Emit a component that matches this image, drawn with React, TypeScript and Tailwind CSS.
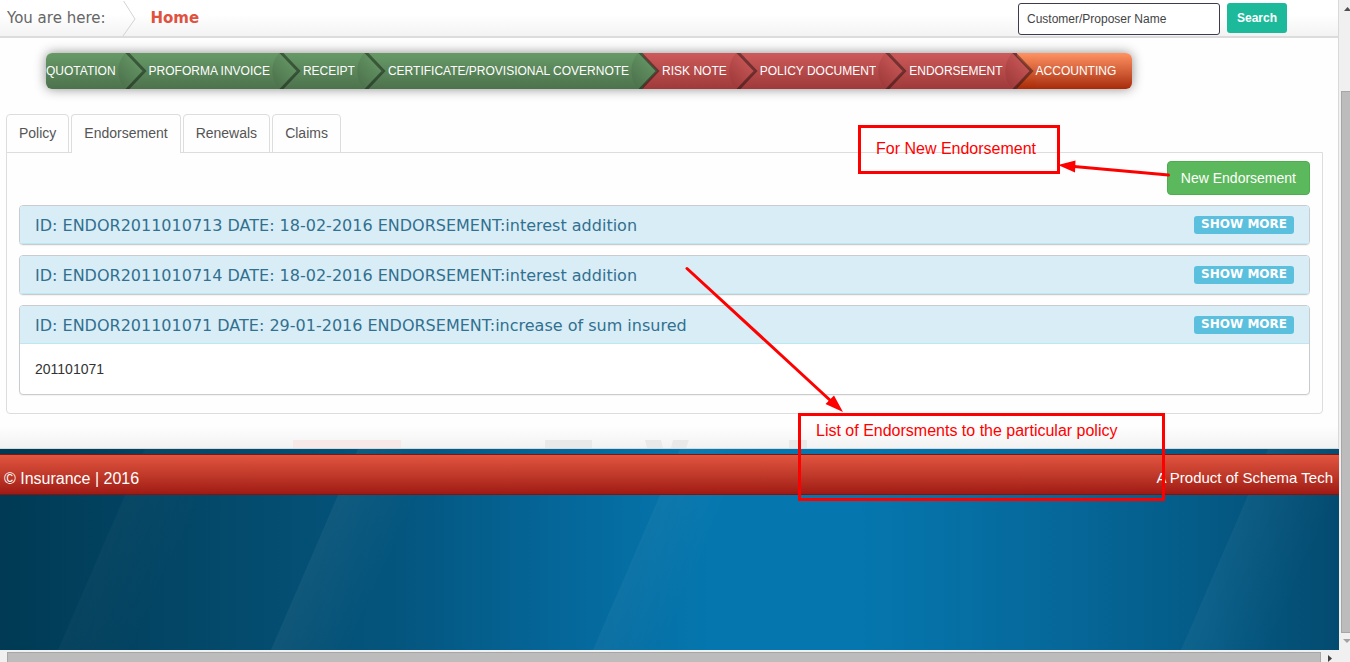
import React from "react";

type Tone = "green" | "red" | "orange";

const tones: Record<Tone, { top: string; bottom: string; cls: string }> = {
  green: { top: "#679a67", bottom: "#4d724d", cls: "bg-linear-to-b from-[#679a67] to-[#4d724d]" },
  red: { top: "#cd5a5a", bottom: "#9f3a3a", cls: "bg-linear-to-b from-[#cd5a5a] to-[#9f3a3a]" },
  orange: { top: "#ff9262", bottom: "#a82a06", cls: "bg-linear-to-b from-[#ff9262] to-[#a82a06]" },
};

const steps: { label: string; tone: Tone }[] = [
  { label: "QUOTATION", tone: "green" },
  { label: "PROFORMA INVOICE", tone: "green" },
  { label: "RECEIPT", tone: "green" },
  { label: "CERTIFICATE/PROVISIONAL COVERNOTE", tone: "green" },
  { label: "RISK NOTE", tone: "red" },
  { label: "POLICY DOCUMENT", tone: "red" },
  { label: "ENDORSEMENT", tone: "red" },
  { label: "ACCOUNTING", tone: "orange" },
];

const tabs = ["Policy", "Endorsement", "Renewals", "Claims"];

const endorsements = [
  { title: "ID: ENDOR2011010713 DATE: 18-02-2016 ENDORSEMENT:interest addition" },
  { title: "ID: ENDOR2011010714 DATE: 18-02-2016 ENDORSEMENT:interest addition" },
  { title: "ID: ENDOR201101071 DATE: 29-01-2016 ENDORSEMENT:increase of sum insured", body: "201101071" },
];

function Chevron({ id, from, to }: { id: string; from: Tone; to: Tone }) {
  return (
    <svg className="h-9 w-[33px] shrink-0" viewBox="0 0 33 36" aria-hidden="true">
      <defs>
        <linearGradient id={`${id}a`} x1="0" y1="0" x2="0" y2="1">
          <stop offset="0" stopColor={tones[from].top} />
          <stop offset="1" stopColor={tones[from].bottom} />
        </linearGradient>
        <linearGradient id={`${id}b`} x1="0" y1="0" x2="0" y2="1">
          <stop offset="0" stopColor={tones[to].top} />
          <stop offset="1" stopColor={tones[to].bottom} />
        </linearGradient>
        <linearGradient id={`${id}c`} gradientUnits="userSpaceOnUse" x1="27" y1="6" x2="3" y2="30">
          <stop offset="0" stopColor={tones[from].top} />
          <stop offset="1" stopColor={tones[from].bottom} />
        </linearGradient>
      </defs>
      <rect width="14" height="36" fill={`url(#${id}a)`} />
      <rect x="14" width="19" height="36" fill={`url(#${id}b)`} />
      <path d="M9 0 L11 0 L28.500 18 L11 36 L9 36 C0 25 0 11 9 0 Z" fill={`url(#${id}c)`} />
      <path d="M10.500 -1 L28.500 18 L10.500 37" fill="none" stroke="#000" strokeOpacity="0.4" strokeWidth="3" />
    </svg>
  );
}

function StepBar() {
  return (
    <nav className="mt-[15px] ml-[46px] flex w-max overflow-hidden rounded-md shadow-[0_0_12px_rgba(0,0,0,0.45)]" aria-label="Progress">
      {steps.map((s, i) => (
        <a key={s.label} href="#" className={`flex h-9 items-center text-xs whitespace-nowrap text-white ${tones[s.tone].cls}`}>
          <span className={i === steps.length - 1 ? "pr-4" : ""}>{s.label}</span>
          {i < steps.length - 1 && <Chevron id={`s${i}`} from={s.tone} to={steps[i + 1].tone} />}
        </a>
      ))}
    </nav>
  );
}

function Watermark() {
  return (
    <svg className="absolute bottom-0 left-0 h-2 w-[820px]" viewBox="0 0 820 8" aria-hidden="true">
      <path d="M293 0H401V8H293Z" fill="#f8e9e9" />
      <path d="M545 0H592V8H545Z M645 0H661L663 8H647Z M673 0H689L686 8H671Z M789 0H807V8H789Z" fill="#e9e9e9" />
    </svg>
  );
}

const streaks = [
  { x: 145, w: 80, o: 0.025 },
  { x: 358, w: 80, o: 0.05 },
  { x: 680, w: 70, o: 0.04 },
  { x: 1268, w: 90, o: 0.04 },
];

function Streaks() {
  return (
    <svg className="absolute inset-0 h-full w-full" viewBox="0 0 1339 201" preserveAspectRatio="none" aria-hidden="true">
      {streaks.map((s) => (
        <React.Fragment key={s.x}>
          <linearGradient id={`k${s.x}`} gradientUnits="userSpaceOnUse" x1={s.x - 43} y1="100" x2={s.x - 43 + s.w * 0.84} y2={100 + s.w * 0.37}>
            <stop offset="0" stopColor="#fff" stopOpacity={s.o} />
            <stop offset="1" stopColor="#fff" stopOpacity="0" />
          </linearGradient>
          <path d={`M${s.x} 0 H${s.x + 220} L${s.x + 133} 201 H${s.x - 87} Z`} fill={`url(#k${s.x})`} />
        </React.Fragment>
      ))}
    </svg>
  );
}

function Annotations() {
  return (
    <div className="pointer-events-none absolute inset-0 text-base leading-5 text-[#fe0000]">
      <div className="absolute top-[125px] left-[858px] h-[49px] w-[202px] border-3 border-[#fe0000] px-[15px] py-[11px]">For New Endorsement</div>
      <div className="absolute top-[413px] left-[798px] h-[88px] w-[367px] border-3 border-[#fe0000] px-[15px] py-[5px]">
        List of Endorsments to the particular policy
      </div>
      <svg className="absolute top-0 left-0 h-[662px] w-[1350px]" viewBox="0 0 1350 662" aria-hidden="true">
        <g stroke="#fe0000" strokeWidth="3" strokeLinecap="round" fill="none">
          <path d="M1168.500 175 L1074 166.500" />
          <path d="M687 268.500 L832 402" />
        </g>
        <path d="M1058 165 L1075.500 160.500 L1075 172.500 Z M843 412 L825.500 404 L834 395.500 Z" fill="#fe0000" />
      </svg>
    </div>
  );
}

export default function App() {
  return (
    <div className="relative flex min-h-screen flex-col bg-[#f0f0f0] font-['Liberation_Sans',Arial,sans-serif] text-sm text-[#333]">
      <div className="flex flex-1">
        <div className="flex min-w-0 flex-1 flex-col bg-[linear-gradient(90deg,#003a54_0%,#04496a_16%,#04567f_30%,#05679a_42%,#0577ae_53%,#0577ae_64%,#06689a_79%,#045b86_90%,#044b70_100%)]">
          <main className="relative border-r border-b border-[#d9d9d9] bg-[linear-gradient(to_top,#f2f2f2,#fefefe_22px)] pb-[34px]">
            <Watermark />
            <header className="flex h-[38px] items-center border-b-2 border-[#dcdcdc] bg-linear-to-b from-white from-40% to-[#f3f3f3] pt-[2px] pr-[51px] pl-[7px] font-['DejaVu_Sans',Verdana,sans-serif] text-[15px]">
              <span className="text-[#666]">You are here:</span>
              <svg className="ml-[15px] h-9 w-4" viewBox="0 0 16 36" fill="none" stroke="#d3d3d3" aria-hidden="true">
                <path d="M2 -1 L14 18 L2 35" />
              </svg>
              <a href="#" className="ml-[14px] font-bold text-[#e0513f]">Home</a>
              <form className="ml-auto flex items-start gap-[7px] font-['Liberation_Sans',Arial,sans-serif] text-xs" onSubmit={(e) => e.preventDefault()}>
                <input
                  aria-label="Customer/Proposer Name"
                  placeholder="Customer/Proposer Name"
                  className="h-8 w-[202px] rounded-[3px] border border-[#3c3c4c] bg-white px-2 placeholder:text-[#444]"
                />
                <button className="h-[30px] rounded-[3px] bg-[#1db99b] px-[10px] font-bold text-white">Search</button>
              </form>
            </header>

            <StepBar />

            <div className="mt-[25px] mr-[15px] ml-[6px]">
              <div role="tablist" className="relative z-10 -mb-px flex items-start gap-[2px]">
                {tabs.map((t, i) => (
                  <button
                    key={t}
                    role="tab"
                    aria-selected={i === 1}
                    className={
                      i === 1
                        ? "h-[39px] rounded-t border border-b-0 border-[#ddd] bg-[#fefefe] px-3 pb-[2px] text-[#555]"
                        : "h-[39px] rounded-t border border-[#ddd] px-3 pb-[2px] text-[#555]"
                    }
                  >
                    {t}
                  </button>
                ))}
              </div>
              <section className="flex flex-col gap-[10px] rounded-b border border-[#ddd] px-3 pt-2 pb-[18px]">
                <button className="h-[34px] self-end rounded border border-[#4cae4c] bg-[#5cb85c] px-[13px] text-white">New Endorsement</button>
                {endorsements.map((e) => (
                  <article key={e.title} className="overflow-hidden rounded border border-[#c9ccce] bg-white shadow-[0_1px_1px_rgba(0,0,0,0.05)]">
                    <div className="flex h-[38px] items-center justify-between border-b border-[#bce8f1] bg-[#d9edf7] px-[15px] font-['DejaVu_Sans',Verdana,sans-serif] text-base text-[#31708f]">
                      <h3 className="pt-[2px]">{e.title}</h3>
                      <button className="h-[18px] rounded-[3px] bg-[#5bc0de] px-[7px] pb-[2px] text-xs leading-4 font-bold text-white">SHOW MORE</button>
                    </div>
                    {e.body && <p className="p-[15px] leading-5">{e.body}</p>}
                  </article>
                ))}
              </section>
            </div>
          </main>

          <div className="relative flex-1 pt-[5px]">
            <Streaks />
            <footer className="relative flex h-[41px] items-center justify-between border-y border-[#7d1512] bg-linear-to-b from-[#e2553f] to-[#a01a14] pt-2 pr-[6px] pl-1 text-base text-white">
              <span>© Insurance | 2016</span>
              <span className="text-[15px]">A Product of Schema Tech</span>
            </footer>
          </div>
        </div>

        <div className="flex w-[11px] flex-col overflow-hidden pl-[2px]" aria-hidden="true">
          <svg className="h-[91px] w-[10px]" viewBox="0 0 10 91"><path d="M3 11 L6.500 7 L10 11 Z" fill="#505050" /></svg>
          <div className="w-[10px] flex-1 border border-r-0 border-[#a6a6a6] bg-[#bcbcbc]" />
          <svg className="h-[17px] w-[10px]" viewBox="0 0 10 17"><path d="M2 6 H10 L6 10 Z" fill="#a3a3a3" /></svg>
        </div>
      </div>

      <div className="flex h-3 items-end pl-[7px]" aria-hidden="true">
        <div className="h-[10px] flex-1 border border-b-0 border-[#a6a6a6] bg-[#bcbcbc]" />
        <svg className="h-3 w-[29px]" viewBox="0 0 29 12"><path d="M7 5 L11 8.500 L7 12 Z" fill="#404040" /></svg>
      </div>

      <Annotations />
    </div>
  );
}
